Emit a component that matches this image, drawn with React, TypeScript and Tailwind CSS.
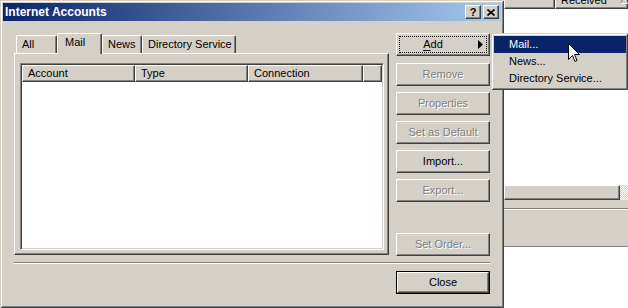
import React from "react";

const raised =
  "border border-t-white border-l-white border-r-[#404040] border-b-[#404040] shadow-[inset_-1px_-1px_#808080]";
const disabledText = "text-[#808080] [text-shadow:1px_1px_0_#ffffff]";

const tabs = [
  { label: "All", width: "w-[41px]" },
  { label: "Mail", width: "w-[45px]", active: true },
  { label: "News", width: "w-[40px]" },
  { label: "Directory Service", width: "w-[94px]" },
];

const columns = [
  { label: "Account", width: "w-[113px]" },
  { label: "Type", width: "w-[113px]" },
  { label: "Connection", width: "w-[115px]" },
];

const sideButtons = [
  { label: "Remove", disabled: true },
  { label: "Properties", disabled: true },
  { label: "Set as Default", disabled: true },
  { label: "Import...", disabled: false },
  { label: "Export...", disabled: true },
];

const menuItems = ["Mail...", "News...", "Directory Service..."];

function PushButton({ label, disabled = false }: { label: string; disabled?: boolean }) {
  return (
    <div
      className={`flex h-[23px] w-[94px] items-center justify-center bg-[#d4d0c8] ${raised} ${
        disabled ? disabledText : "text-black"
      }`}
    >
      {label}
    </div>
  );
}

function TitleBar() {
  return (
    <div className="flex h-[18px] items-center bg-[linear-gradient(to_right,#0a246a,#a6caf0)] pl-[2px] pr-[2px]">
      <span className="text-[12px] font-bold text-white">Internet Accounts</span>
      <div className="ml-auto flex gap-[2px]">
        <div className={`flex h-[14px] w-[16px] items-center justify-center bg-[#d4d0c8] ${raised}`}>
          <span className="text-[11px] font-bold leading-none text-black">?</span>
        </div>
        <div className={`flex h-[14px] w-[16px] items-center justify-center bg-[#d4d0c8] ${raised}`}>
          <svg width="8" height="7" viewBox="0 0 8 7" aria-hidden="true">
            <path d="M0.5 0.5 L7.5 6.5 M7.5 0.5 L0.5 6.5" stroke="#000" strokeWidth="1.6" />
          </svg>
        </div>
      </div>
    </div>
  );
}

function AccountsPanel() {
  return (
    <div className="flex w-[375px] flex-col">
      <div className="flex h-[20px] items-end pl-[2px]">
        {tabs.map((tab) =>
          tab.active ? (
            <div
              key={tab.label}
              className={`relative z-10 -mb-px flex h-[21px] ${tab.width} items-center rounded-t-[2px] border-t border-l border-r border-t-white border-l-white border-r-[#404040] bg-[#d4d0c8] pb-[3px] pl-[7px] shadow-[inset_-1px_0_#808080]`}
            >
              {tab.label}
            </div>
          ) : (
            <div
              key={tab.label}
              className={`flex h-[18px] ${tab.width} items-center rounded-t-[2px] border-t border-l border-r border-t-white border-l-white border-r-[#404040] pl-[5px] shadow-[inset_-1px_0_#808080]`}
            >
              {tab.label}
            </div>
          )
        )}
      </div>
      <div
        className={`flex h-[202px] flex-col bg-[#d4d0c8] pb-[4px] pl-[5px] pr-[4px] pt-[9px] ${raised}`}
      >
        <div className="flex flex-1 flex-col border border-t-[#808080] border-l-[#808080] border-r-white border-b-white bg-white p-px shadow-[inset_1px_1px_#404040,inset_-1px_-1px_#d4d0c8]">
          <div className="flex h-[17px] shrink-0">
            {columns.map((col) => (
              <div key={col.label} className={`flex ${col.width} items-center bg-[#d4d0c8] pl-[5px] ${raised}`}>
                {col.label}
              </div>
            ))}
            <div className={`flex-1 bg-[#d4d0c8] ${raised}`} />
          </div>
          <div className="flex-1" />
        </div>
      </div>
    </div>
  );
}

function ButtonColumn() {
  return (
    <div className="flex w-[94px] flex-col">
      <div className={`relative flex h-[23px] items-center justify-center bg-[#d4d0c8] pr-[20px] ${raised}`}>
        <span>
          <span className="underline underline-offset-2">A</span>dd
        </span>
        <svg width="5" height="9" viewBox="0 0 5 9" className="absolute right-[6px] top-[6px]" aria-hidden="true">
          <path d="M0 0 L5 4.5 L0 9 Z" fill="#000" />
        </svg>
        <div className="absolute inset-[2px] border border-dotted border-black" />
      </div>
      <div className="mt-[7px] flex flex-col gap-[6px]">
        {sideButtons.map((b) => (
          <PushButton key={b.label} label={b.label} disabled={b.disabled} />
        ))}
      </div>
      <div className="mt-auto translate-y-px">
        <PushButton label="Set Order..." disabled />
      </div>
    </div>
  );
}

function Dialog() {
  return (
    <div className="flex h-[308px] w-[504px] shrink-0 flex-col bg-[#d4d0c8] p-[3px] shadow-[inset_1px_1px_#d4d0c8,inset_-1px_-1px_#404040,inset_2px_2px_#ffffff,inset_-2px_-2px_#808080]">
      <TitleBar />
      <div className="flex flex-1 flex-col px-[11px] pt-[12px]">
        <div className="flex gap-[7px]">
          <AccountsPanel />
          <ButtonColumn />
        </div>
        <div className="mt-[7px] h-[2px] border-t border-b border-t-[#808080] border-b-white" />
        <div className="mt-[7px] flex justify-end">
          <div className="border border-black">
            <div className={`flex h-[21px] w-[92px] items-center justify-center bg-[#d4d0c8] ${raised}`}>Close</div>
          </div>
        </div>
      </div>
    </div>
  );
}

function BackWindow() {
  return (
    <div className="flex flex-1 flex-col overflow-hidden bg-white">
      <div className="-mt-[9px] flex h-[18px] shrink-0">
        <div className={`w-[51px] bg-[#d4d0c8] ${raised}`} />
        <div className={`relative flex flex-1 items-center bg-[#d4d0c8] pl-[5px] ${raised}`}>
          Received
          <svg width="8" height="7" viewBox="0 0 8 7" className="absolute left-[64px] top-[5px]" aria-hidden="true">
            <path d="M0.5 6.5 L4 0.5" stroke="#808080" fill="none" />
            <path d="M4 0.5 L7.5 6.5 L0.5 6.5" stroke="#ffffff" fill="none" />
          </svg>
        </div>
      </div>
      <div className="flex-1 bg-white" />
      <div className="flex h-[15px] shrink-0 bg-[repeating-conic-gradient(#ffffff_0_25%,#d4d0c8_0_50%)] bg-[length:2px_2px]">
        <div className={`w-[116px] bg-[#d4d0c8] ${raised}`} />
      </div>
      <div className="h-[8px] shrink-0 bg-[#d4d0c8]" />
      <div className="h-[2px] shrink-0 border-t border-b border-t-[#808080] border-b-white" />
      <div className="h-[36px] shrink-0 bg-[#d4d0c8]" />
      <div className="h-px shrink-0 bg-[#808080]" />
      <div className="h-[61px] shrink-0 bg-white" />
    </div>
  );
}

function AddMenu() {
  return (
    <div className="absolute left-[491px] top-[33px] w-[137px] bg-[#d4d0c8] p-[3px] pr-[2px] pt-[3px] shadow-[inset_1px_1px_#d4d0c8,inset_-1px_-1px_#404040,inset_2px_2px_#ffffff,inset_-2px_-2px_#808080]">
      {menuItems.map((item, index) => (
        <div
          key={item}
          className={`flex h-[17px] items-center pl-[15px] ${index === 0 ? "bg-[#0a246a] text-white" : "text-black"}`}
        >
          {item}
        </div>
      ))}
    </div>
  );
}

function Cursor() {
  return (
    <svg width="13" height="21" viewBox="0 0 13 21" className="absolute left-[567px] top-[42px]" aria-hidden="true">
      <path
        d="M1.5 1.5 V17.5 L5.5 13.5 L8 19.5 L10 18.5 L7.5 12.5 H12.5 Z"
        fill="#ffffff"
        stroke="#000000"
        strokeWidth="1"
      />
    </svg>
  );
}

export default function App() {
  return (
    <div className="relative flex h-[308px] w-[628px] overflow-hidden bg-white font-['Liberation_Sans',Arial,sans-serif] text-[11px] text-black">
      <Dialog />
      <BackWindow />
      <AddMenu />
      <Cursor />
    </div>
  );
}
